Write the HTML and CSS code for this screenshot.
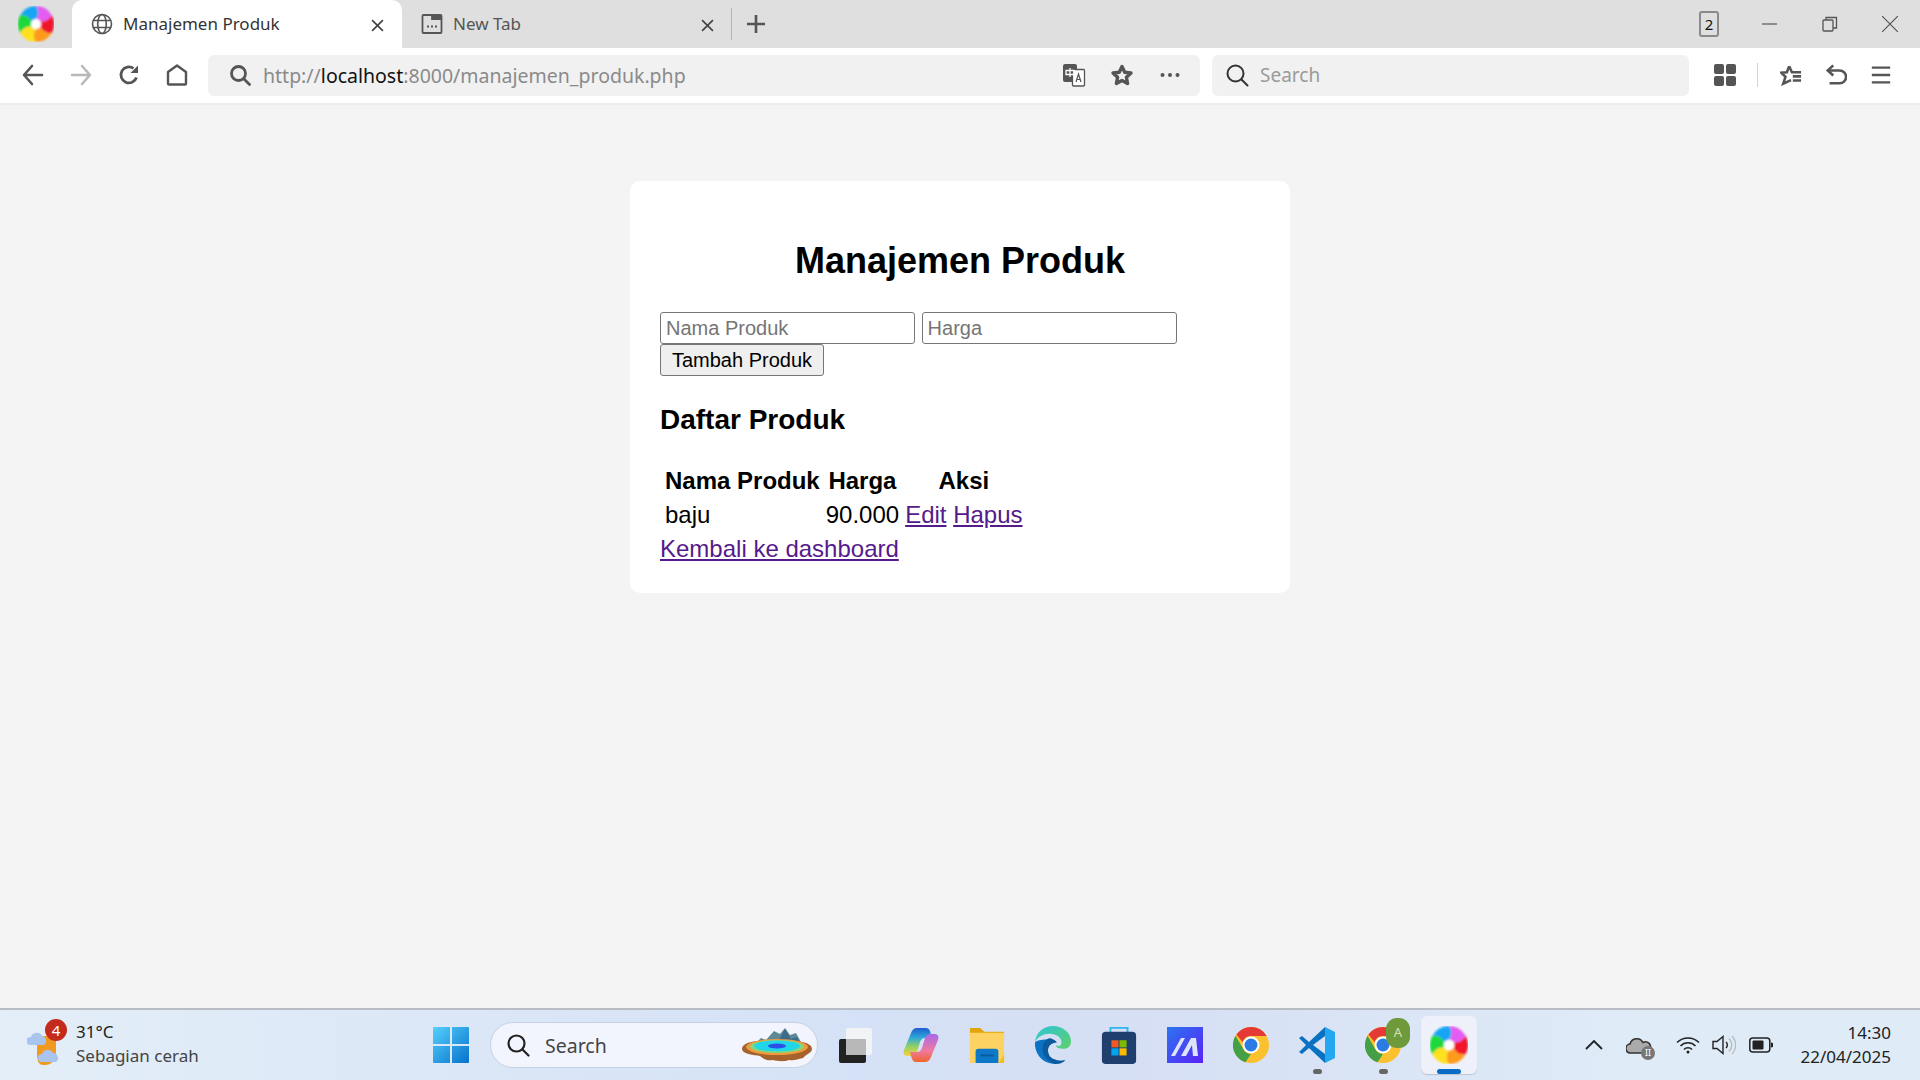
FILE: index.html
```html
<!DOCTYPE html>
<html lang="en">
<head>
    <meta charset="UTF-8">
    <meta name="viewport" content="width=device-width, initial-scale=1.0">
    <title>Manajemen Produk</title>
    <link rel="stylesheet" href="styles.css">
</head>
<body>
    <div class="tabstrip">
        <div class="app-logo">
            <svg class="swirl" viewBox="-18 -18 36 36">
                <defs>
                    <filter id="soft" x="-20%" y="-20%" width="140%" height="140%"><feGaussianBlur stdDeviation="0.9"/></filter>
                    <path id="petal" d="M0 -18A18 18 0 0 1 15.600 -9C13.600 -4.400 9.300 -1.900 4.330 -2.500L0 -5C3 -9 3 -14 0 -18z"/>
                </defs>
                <g filter="url(#soft)" id="swirlshape">
                    <use href="#petal" fill="#e45cf2"/>
                    <use href="#petal" fill="#f0182c" transform="rotate(60)"/>
                    <use href="#petal" fill="#ff9a1a" transform="rotate(120)"/>
                    <use href="#petal" fill="#ffe01a" transform="rotate(180)"/>
                    <use href="#petal" fill="#1cd83a" transform="rotate(240)"/>
                    <use href="#petal" fill="#18a4f5" transform="rotate(300)"/>
                    <circle r="5" fill="#fff"/>
                </g>
            </svg>
        </div>
        <div class="tab tab-active">
            <svg class="tab-icon" viewBox="0 0 22 22" fill="none" stroke="#555" stroke-width="1.6"><circle cx="11" cy="11" r="9.5"/><ellipse cx="11" cy="11" rx="4.3" ry="9.5"/><path d="M2 7.5h18M2 14.5h18"/></svg>
            <span class="tab-title">Manajemen Produk</span>
            <svg class="tab-close" viewBox="0 0 12 12" stroke="#444" stroke-width="1.5"><path d="M1 1l10 10M11 1L1 11"/></svg>
        </div>
        <div class="tab">
            <svg class="tab-icon" viewBox="0 0 22 22" fill="none" stroke="#555" stroke-width="1.8"><rect x="1.5" y="2" width="19" height="18" rx="1"/><path d="M11 3h9v3h-9z" fill="#555"/><path d="M6 13.5h2M10 13.5h2M14 13.5h2" stroke-width="2"/></svg>
            <span class="tab-title muted">New Tab</span>
            <svg class="tab-close" viewBox="0 0 12 12" stroke="#444" stroke-width="1.5"><path d="M1 1l10 10M11 1L1 11"/></svg>
        </div>
        <div class="tab-sep"></div>
        <svg class="new-tab" viewBox="0 0 20 20" stroke="#555" stroke-width="2.6"><path d="M10 1v18M1 10h18"/></svg>
        <div class="win-controls">
            <div class="tab-count">2</div>
            <svg class="win-btn" viewBox="0 0 16 16" stroke="#555" stroke-width="1.2"><path d="M0 8h15"/></svg>
            <svg class="win-btn" viewBox="0 0 16 16" fill="none" stroke="#555" stroke-width="1.3"><rect x="1" y="4" width="10" height="11" rx="1"/><path d="M4 4V1.5h10.5V12H11"/></svg>
            <svg class="win-btn" viewBox="0 0 16 16" stroke="#555" stroke-width="1.2"><path d="M0 0l16 16M16 0L0 16"/></svg>
        </div>
    </div>

    <div class="toolbar">
        <svg class="nav-icon" viewBox="0 0 22 22" fill="none" stroke="#555" stroke-width="2.6" stroke-linecap="round" stroke-linejoin="round"><path d="M10 2l-8 9 8 9M2.500 11H20"/></svg>
        <svg class="nav-icon" viewBox="0 0 22 22" fill="none" stroke="#b9b9b9" stroke-width="2.6" stroke-linecap="round" stroke-linejoin="round"><path d="M12 2l8 9-8 9M19.500 11H2"/></svg>
        <svg class="nav-icon" viewBox="0 0 22 22" fill="none" stroke="#555" stroke-width="2.8"><path d="M18.500 13.500A8 8 0 1 1 15.500 4.300"/><path d="M20 1.500v7.500h-7.500z" fill="#555" stroke="none"/></svg>
        <svg class="nav-icon" viewBox="0 0 22 22" fill="none" stroke="#555" stroke-width="2.4" stroke-linejoin="round"><path d="M11 1.500l9 6.500v11.500a1 1 0 0 1-1 1H3a1 1 0 0 1-1-1V8z"/></svg>
        <div class="addressbar">
            <svg class="search-icon" viewBox="0 0 22 22" fill="none" stroke="#555" stroke-width="2.8" stroke-linecap="round"><circle cx="9.500" cy="9.500" r="7"/><path d="M15 15l5.500 5.500"/></svg>
            <div class="url"><span class="url-dim">http://</span>localhost<span class="url-dim">:8000/manajemen_produk.php</span></div>
            <svg class="addr-icon" viewBox="0 0 24 24"><rect x="1" y="1" width="14" height="18" rx="2" fill="#555"/><rect x="10.500" y="6.500" width="12" height="16.500" rx="1" fill="#fff" stroke="#555" stroke-width="1.300"/><path d="M4 7.500h8v4H4zM8 5v9" fill="none" stroke="#fff" stroke-width="1.300"/><path d="M14 19l2.500-8 2.500 8M15 16.500h3" fill="none" stroke="#555" stroke-width="1.200"/></svg>
            <svg class="addr-icon" viewBox="0 0 24 24" fill="none" stroke="#555" stroke-width="3.400" stroke-linejoin="round"><path d="M12 3.500l2.700 5.700 6.300.8-4.600 4.300 1.200 6.200-5.600-3.100-5.600 3.100 1.200-6.200L3 10l6.300-.8z"/></svg>
            <svg class="addr-icon" viewBox="0 0 24 24" fill="#555"><circle cx="4.500" cy="12" r="2"/><circle cx="12" cy="12" r="2"/><circle cx="19.500" cy="12" r="2"/></svg>
        </div>
        <div class="searchbar">
            <svg class="search-icon thin" viewBox="0 0 24 24" fill="none" stroke="#333" stroke-width="2" stroke-linecap="round"><circle cx="10.500" cy="10.500" r="8"/><path d="M16.500 16.500l6 6"/></svg>
            <span class="search-text">Search</span>
        </div>
        <div class="tools">
            <svg class="tool-icon" viewBox="0 0 22 22" fill="#555"><rect x="0" y="0" width="10" height="10" rx="2"/><rect x="12" y="0" width="10" height="10" rx="2"/><rect x="0" y="12" width="10" height="10" rx="2"/><rect x="12" y="12" width="10" height="10" rx="2"/></svg>
            <div class="tool-sep"></div>
            <svg class="tool-icon" viewBox="0 0 24 24" fill="none" stroke="#555" stroke-width="2.800"><path d="M10 2.500L7.500 9 1.500 9.500 6 14 3.500 21.500 12 17.500"/><path d="M10 2.500L13 9h10M14 13.500h9M14 18h9"/></svg>
            <svg class="tool-icon" viewBox="0 0 24 24" fill="none" stroke="#555" stroke-width="2.800"><path d="M9 1.500L3 7l6 5.500"/><path d="M3 7h13a6.500 6.500 0 0 1 0 14H5"/></svg>
            <svg class="tool-icon" viewBox="0 0 24 24" stroke="#555" stroke-width="2.600"><path d="M2 4h20M2 12h20M2 20h20"/></svg>
        </div>
    </div>

    <main class="page">
        <div class="container">
            <h2>Manajemen Produk</h2>
            <form class="product-form">
                <input type="text" placeholder="Nama Produk">
                <input type="text" placeholder="Harga">
                <button type="button">Tambah Produk</button>
            </form>
            <h3>Daftar Produk</h3>
            <table>
                <tr>
                    <th>Nama Produk</th>
                    <th>Harga</th>
                    <th>Aksi</th>
                </tr>
                <tr>
                    <td>baju</td>
                    <td>90.000</td>
                    <td><a href="#">Edit</a> <a href="#">Hapus</a></td>
                </tr>
            </table>
            <a class="back-link" href="#">Kembali ke dashboard</a>
        </div>
    </main>

    <footer class="taskbar">
        <div class="weather">
            <div class="weather-icon">
                <svg viewBox="0 0 40 42" width="40" height="42"><path d="M10 12h19v18a11 11 0 0 1-11 11h-2C11 41 10 35 10 30z" fill="#f29a1f"/><path d="M3 21a4 4 0 0 1 1-8 6 6 0 0 1 11-1 5 5 0 0 1 2 9z" fill="#a9c4ee"/><path d="M15 38a4 4 0 0 1 0-8 6 6 0 0 1 11-1 5 5 0 0 1 3 9z" fill="#a9c4ee"/></svg>
                <span class="weather-badge">4</span>
            </div>
            <div class="weather-text">
                <div class="temp">31°C</div>
                <div class="cond">Sebagian cerah</div>
            </div>
        </div>
        <svg class="start" viewBox="0 0 36 36"><defs><linearGradient id="winblue" x1="0" y1="0" x2="1" y2="1"><stop offset="0" stop-color="#55d0fb"/><stop offset="1" stop-color="#0672cc"/></linearGradient></defs><path d="M1 0h16v17H0V1a1 1 0 0 1 1-1zM19 0h16a1 1 0 0 1 1 1v16H19zM0 19h17v17H1a1 1 0 0 1-1-1zM19 19h17v16a1 1 0 0 1-1 1H19z" fill="url(#winblue)"/></svg>
        <div class="task-search">
            <svg class="task-search-icon" viewBox="0 0 24 24" fill="none" stroke="#222" stroke-width="2.200" stroke-linecap="round"><circle cx="10.500" cy="10.500" r="8"/><path d="M16.500 16.500l6 6"/></svg>
            <span class="task-search-text">Search</span>
            <svg class="geyser" viewBox="0 0 72 38"><path d="M14 18l6-6 5 2 8-9 6 3 5-6 5 7 6-2 6 11z" fill="#5b8a96"/><path d="M36 18l8-15 6 10 6-2 4 8z" fill="#3d6b8a"/><path d="M1 23c0-7 15-9 35-9s35 2 35 9c0 4-6 5-9 9-6 1-8 3-14 2-5 2-12 1-16 0-5 1-10-1-13-4-6-1-18-2-18-7z" fill="#a5622b"/><ellipse cx="36" cy="21" rx="31" ry="8" fill="#ef9a3c"/><ellipse cx="36" cy="20.500" rx="27" ry="6.500" fill="#7fd880"/><ellipse cx="36" cy="20" rx="23" ry="5.500" fill="#22d6ea"/><ellipse cx="36" cy="20" rx="9" ry="2.500" fill="#2a50e8"/></svg>
        </div>
        <div class="apps">
            <div class="app"><svg class="app-icon" viewBox="0 0 36 36"><rect x="2" y="12" width="27" height="24" rx="2" fill="#222"/><rect x="9" y="1" width="26" height="27" rx="2" fill="#f4f4f4" opacity=".92"/><rect x="9" y="12" width="20" height="16" fill="#b8b8b8"/></svg></div>
            <div class="app"><svg class="app-icon" viewBox="0 0 36 36"><defs><linearGradient id="cop1" x1="0" y1="0" x2="0" y2="1"><stop offset="0" stop-color="#1d5fd0"/><stop offset=".35" stop-color="#2fa8d8"/><stop offset=".65" stop-color="#8fd068"/><stop offset="1" stop-color="#f5d23c"/></linearGradient><linearGradient id="cop2" x1="0" y1="0" x2="0" y2="1"><stop offset="0" stop-color="#f0652c"/><stop offset=".4" stop-color="#ee7aa0"/><stop offset="1" stop-color="#a868e8"/></linearGradient></defs><path d="M14 1h9c2 0 3 1 4 3l2 7h-7c-3 0-4 2-5 4l-3 10c-1 3-3 4-5 4H4c-3 0-4-3-3-6l7-17c1-3 3-5 6-5z" fill="url(#cop1)"/><path d="M14 1h9c2 0 3 1 4 3l2 7h-7c-3 0-4 2-5 4l-3 10c-1 3-3 4-5 4H4c-3 0-4-3-3-6l7-17c1-3 3-5 6-5z" fill="url(#cop2)" transform="rotate(180 18 18)"/></svg></div>
            <div class="app"><svg class="app-icon" viewBox="0 0 36 40"><path d="M0 3a1 1 0 0 1 1-1h10l4 4h20a1 1 0 0 1 1 1v4H0z" fill="#e2a50c"/><path d="M0 7h36v32H0z" fill="#fcd262"/><path d="M6 37V27a3 3 0 0 1 3-3h18a3 3 0 0 1 3 3v12H6z" fill="#0d78c8"/><path d="M11 31h14" stroke="#075a9e" stroke-width="2"/><path d="M30 39h6V30z" fill="#f5be1b"/></svg></div>
            <div class="app"><svg class="app-icon" viewBox="0 0 38 40"><defs><linearGradient id="edge1" x1="0" y1="0" x2="1" y2="1"><stop offset="0" stop-color="#2fc5d8"/><stop offset="1" stop-color="#5dd06a"/></linearGradient></defs><path d="M19 0C9 0 1 7 0 17c3-6 9-9 15-9 8 0 13 4 13 9 0 2-1 4-3 4s-3-1-3-1c0 3 4 4 8 4 5 0 8-3 8-8C38 7 29 0 19 0z" fill="url(#edge1)"/><path d="M0 17C-1 30 9 40 21 40c4 0 8-1 11-4-4 1-13 1-17-5-2-4-2-9 2-12 2-1 4-2 6-2-2-2-5-3-8-3C8 14 3 15 0 17z" fill="#0c72c4"/><path d="M15 13c-5 2-7 6-7 11 0 7 5 13 13 16 4 0 8-1 11-4-4 1-13 1-17-5-2-4-2-9 2-12 2-1 4-2 6-2-2-2-5-4-8-4z" fill="#0a5a9c"/></svg></div>
            <div class="app"><svg class="app-icon" viewBox="0 0 36 40"><path d="M9 9V2h18v7" fill="none" stroke="#2fb6ec" stroke-width="2"/><rect x="0" y="6" width="36" height="34" rx="4" fill="#1f3f6e"/><rect x="10" y="15" width="7.500" height="7.500" fill="#f05a22"/><rect x="18.500" y="15" width="7.500" height="7.500" fill="#7fba00"/><rect x="10" y="23.500" width="7.500" height="7.500" fill="#00a4ef"/><rect x="18.500" y="23.500" width="7.500" height="7.500" fill="#ffb900"/></svg></div>
            <div class="app"><svg class="app-icon" viewBox="0 0 36 36"><defs><linearGradient id="mblue" x1="0" y1="0" x2="1" y2="1"><stop offset="0" stop-color="#2b74f0"/><stop offset="1" stop-color="#5a22f5"/></linearGradient></defs><rect width="36" height="36" fill="url(#mblue)"/><path d="M4 29L14 11h4L8 29zM14 29l10-18h5l2 18h-5l-1-11-6 11z" fill="#dde3fb"/></svg></div>
            <div class="app"><svg class="app-icon" viewBox="0 0 36 36"><circle cx="18" cy="18" r="18" fill="#fbc02d"/><path d="M18 0a18 18 0 0 1 15.600 9H18a9 9 0 0 0-8.500 6L3.400 7.500A18 18 0 0 1 18 0z" fill="#e53935"/><path d="M2.500 8.800l8 13.700a9 9 0 0 0 7.500 4.500L12.500 35.300A18 18 0 0 1 2.500 8.800z" fill="#43a047"/><circle cx="18" cy="18" r="8.500" fill="#fff"/><circle cx="18" cy="18" r="6.500" fill="#2c7be5"/></svg></div>
            <div class="app">
                <svg class="app-icon" viewBox="0 0 36 36"><path d="M26 0l10 5v26l-10 5z" fill="#24a6f0"/><path d="M26 0L10 15 3 9l-3 2 7 7-7 7 3 2 7-6 16 15v-9L14 18 26 9z" fill="#0a72c2"/></svg>
                <span class="run-dot"></span>
            </div>
            <div class="app">
                <svg class="app-icon" viewBox="0 0 36 36"><circle cx="18" cy="18" r="18" fill="#fbc02d"/><path d="M18 0a18 18 0 0 1 15.600 9H18a9 9 0 0 0-8.500 6L3.400 7.500A18 18 0 0 1 18 0z" fill="#e53935"/><path d="M2.500 8.800l8 13.700a9 9 0 0 0 7.500 4.500L12.500 35.300A18 18 0 0 1 2.500 8.800z" fill="#43a047"/><circle cx="18" cy="18" r="8.500" fill="#fff"/><circle cx="18" cy="18" r="6.500" fill="#2c7be5"/></svg>
                <span class="profile-badge">A</span>
                <span class="run-dot"></span>
            </div>
            <div class="app app-active">
                <svg class="swirl big" viewBox="-18 -18 36 36"><use href="#swirlshape"/></svg>
                <span class="run-bar"></span>
            </div>
        </div>
        <div class="tray">
            <svg class="tray-chevron" viewBox="0 0 18 10" fill="none" stroke="#222" stroke-width="1.800"><path d="M1 9l8-8 8 8"/></svg>
            <div class="tray-cloud">
                <svg viewBox="0 0 26 20" width="26" height="20"><path d="M5 18a4.500 4.500 0 0 1-1-9 7 7 0 0 1 13-1.500A5 5 0 0 1 24 14v1c0 2-2 3-4 3z" fill="#aaa" stroke="#333" stroke-width="1.600"/></svg>
                <span class="cloud-pause">II</span>
            </div>
            <svg class="tray-wifi" viewBox="0 0 24 18" fill="none" stroke="#222" stroke-width="1.500"><path d="M1 6.500a15.500 15.500 0 0 1 22 0M4.500 10a10.500 10.500 0 0 1 15 0M8 13.500a5.500 5.500 0 0 1 8 0"/><circle cx="12" cy="16" r="1.500" fill="#222" stroke="none"/></svg>
            <svg class="tray-volume" viewBox="0 0 24 22" fill="none" stroke="#222" stroke-width="1.400"><path d="M1 7.500h4l6-5v17l-6-5H1z"/><path d="M14 8a4 4 0 0 1 0 6"/><path d="M17 4.500a9 9 0 0 1 0 13M20 2a13 13 0 0 1 0 18" stroke="#bbb"/></svg>
            <svg class="tray-battery" viewBox="0 0 24 16" fill="none"><rect x=".8" y="1" width="20" height="14" rx="3" stroke="#222" stroke-width="1.500"/><rect x="3.500" y="3.500" width="11" height="9" rx="1" fill="#222"/><path d="M22 5.500a2.500 2.500 0 0 1 0 5z" fill="#222"/></svg>
            <div class="clock">
                <div>14:30</div>
                <div>22/04/2025</div>
            </div>
        </div>
    </footer>
</body>
</html>
```

FILE: styles.css
```css
html, body {
    height: 100%;
}

body {
    margin: 0;
    display: flex;
    flex-direction: column;
    height: 100vh;
    overflow: hidden;
    font-family: 'Liberation Sans', Arial, sans-serif;
    font-size: 24px;
    background: #f4f4f4;
    color: #000;
}

svg {
    display: block;
    flex: none;
}

/* browser tabs */
.tabstrip {
    display: flex;
    align-items: center;
    height: 48px;
    flex: none;
    background: #dfdfdf;
    font-family: 'Noto Sans', sans-serif;
    font-size: 17px;
    color: #444;
}

.app-logo {
    width: 71px;
    margin-right: 1px;
    display: flex;
    justify-content: center;
}

.swirl {
    width: 36px;
    height: 36px;
}

.swirl.big {
    width: 38px;
    height: 38px;
}

.tab {
    display: flex;
    align-items: center;
    width: 330px;
    height: 48px;
    box-sizing: border-box;
    padding: 0 18px 0 19px;
}

.tab-active {
    background: #fff;
    border-radius: 10px 10px 0 0;
}

.tab-icon {
    width: 22px;
    height: 22px;
}

.tab-title {
    flex: 1;
    margin: -2px 0 0 10px;
    color: #333;
}

.tab-title.muted {
    color: #555;
}

.tab-close {
    width: 13px;
    height: 13px;
    margin-top: 3px;
}

.tab-sep {
    width: 1px;
    height: 32px;
    background: #b5b5b5;
    margin-left: -1px;
}

.new-tab {
    width: 20px;
    height: 20px;
    margin-left: 14px;
}

.win-controls {
    display: flex;
    align-items: center;
    margin-left: auto;
    padding-right: 22px;
}

.tab-count {
    width: 16px;
    height: 22px;
    border: 2px solid #8a8a8a;
    border-radius: 3px;
    font-size: 15px;
    line-height: 22px;
    text-align: center;
    color: #111;
    margin-right: 43px;
}

.win-btn {
    width: 16px;
    height: 16px;
    margin-left: 44px;
}

.win-btn:first-of-type {
    margin-left: 0;
}

/* address row */
.toolbar {
    display: flex;
    align-items: center;
    height: 57px;
    flex: none;
    box-sizing: border-box;
    padding: 0 0 1px 22px;
    background: #fff;
    border-bottom: 2px solid #ececec;
    font-family: 'Noto Sans', sans-serif;
}

.nav-icon {
    width: 22px;
    height: 22px;
    margin-right: 26px;
}

.addressbar, .searchbar {
    display: flex;
    align-items: center;
    height: 41px;
    background: #f1f1f1;
    border-radius: 6px;
}

.addressbar {
    width: 992px;
    margin-left: -6px;
    margin-right: 12px;
    padding-left: 21px;
    box-sizing: border-box;
}

.search-icon {
    width: 22px;
    height: 22px;
}

.url {
    flex: 1;
    margin-left: 12px;
    font-size: 19.5px;
    color: #111;
}

.url-dim {
    color: #8a8a8a;
}

.addr-icon {
    width: 24px;
    height: 24px;
    margin-right: 24px;
}

.addr-icon:last-child {
    margin-right: 18px;
}

.searchbar {
    width: 477px;
    padding-left: 13px;
    box-sizing: border-box;
}

.search-icon.thin {
    width: 24px;
    height: 24px;
}

.search-text {
    margin-left: 11px;
    font-size: 19px;
    color: #9a9a9a;
}

.tools {
    display: flex;
    align-items: center;
    margin-left: 25px;
}

.tool-icon {
    width: 22px;
    height: 22px;
    margin-right: 23px;
}

.tool-sep {
    width: 1px;
    height: 24px;
    background: #d5d5d5;
    margin: 0 22px 0 -2px;
}

/* the php page */
.page {
    flex: 1;
    min-height: 0;
}

.container {
    width: 600px;
    margin: 76px auto 0;
    padding: 30px;
    background: #fff;
    border-radius: 10px;
}

h2 {
    margin: 29px 0 30px;
    font-size: 36px;
    line-height: 42px;
    text-align: center;
}

.product-form {
    font-size: 20px;
    line-height: 0;
}

input {
    width: 255px;
    height: 32px;
    box-sizing: border-box;
    margin: 0 1px 0 0;
    padding: 1px 5px;
    border: 1px solid #767676;
    border-radius: 3px;
    font-family: inherit;
    font-size: 20px;
}

button {
    width: 164px;
    height: 32px;
    padding: 0;
    border: 1px solid #767676;
    border-radius: 3px;
    background: #efefef;
    font-family: inherit;
    font-size: 20px;
    color: #000;
}

h3 {
    margin: 28px 0 27px;
    font-size: 28px;
    line-height: 32px;
}

table {
    border-spacing: 2.5px;
    margin-bottom: 1px;
}

th, td {
    padding: 1px 1px 1px 3px;
    line-height: 30px;
}

td:nth-child(2) {
    text-align: right;
}

a {
    color: #551a8b;
}

.back-link {
    display: block;
    line-height: 29px;
}

/* taskbar */
.taskbar {
    display: flex;
    align-items: center;
    height: 72px;
    flex: none;
    box-sizing: border-box;
    border-top: 2px solid #b8bcc4;
    background: linear-gradient(to right, #e3eef8, #d5e1f6 45%, #d6dff4 60%, #dfebf7 85%);
    font-family: 'Noto Sans', sans-serif;
    color: #222;
}

.weather {
    display: flex;
    align-items: center;
    width: 433px;
    box-sizing: border-box;
    padding-left: 27px;
}

.weather-icon {
    position: relative;
    width: 40px;
    height: 42px;
}

.weather-badge {
    position: absolute;
    top: -5px;
    left: 18px;
    width: 22px;
    height: 22px;
    border-radius: 50%;
    background: #c42b1c;
    color: #fff;
    font-size: 15px;
    line-height: 22px;
    text-align: center;
}

.weather-text {
    margin: -2px 0 0 9px;
    font-size: 17px;
    line-height: 24px;
}

.cond {
    color: #444;
}

.start {
    width: 36px;
    height: 36px;
}

.task-search {
    display: flex;
    align-items: center;
    width: 328px;
    height: 46px;
    box-sizing: border-box;
    margin-left: 21px;
    padding: 0 4px 0 15px;
    background: #f2f5fd;
    border-radius: 23px;
    border: 1px solid #c6d0e4;
}

.task-search-icon {
    width: 24px;
    height: 24px;
}

.task-search-text {
    flex: 1;
    margin-left: 15px;
    font-size: 19.5px;
    color: #444;
}

.geyser {
    width: 72px;
    height: 38px;
}

.apps {
    display: flex;
    margin-left: 4px;
}

.app {
    position: relative;
    display: flex;
    align-items: center;
    justify-content: center;
    width: 66px;
    height: 58px;
}

.app-icon {
    width: 36px;
    height: 38px;
}

.app-active {
    width: 56px;
    margin-left: 5px;
    background: #eef1fa;
    border-radius: 6px;
    box-shadow: 0 1px 1px rgba(0, 0, 0, .15);
}

.run-dot {
    position: absolute;
    left: 29px;
    bottom: 0;
    width: 9px;
    height: 5px;
    border-radius: 3px;
    background: #666;
}

.run-bar {
    position: absolute;
    left: 16px;
    bottom: 0;
    width: 24px;
    height: 5px;
    border-radius: 3px;
    background: #0a6cc4;
}

.profile-badge {
    position: absolute;
    top: 2px;
    left: 36px;
    width: 24px;
    height: 30px;
    border-radius: 11px;
    background: #6f9a3c;
    color: #d5e2b5;
    font-size: 13px;
    line-height: 28px;
    text-align: center;
}

.tray {
    display: flex;
    align-items: center;
    margin-left: auto;
    padding-right: 29px;
}

.tray-chevron {
    width: 18px;
    height: 10px;
    margin-right: 23px;
}

.tray-cloud {
    position: relative;
    width: 26px;
    height: 20px;
    margin-right: 24px;
}

.cloud-pause {
    position: absolute;
    right: -3px;
    bottom: -5px;
    width: 14px;
    height: 14px;
    border-radius: 50%;
    background: #777;
    color: #fff;
    font-size: 9px;
    line-height: 14px;
    text-align: center;
}

.tray-wifi {
    width: 24px;
    height: 18px;
    margin-right: 12px;
}

.tray-volume {
    width: 24px;
    height: 22px;
    margin-right: 13px;
}

.tray-battery {
    width: 24px;
    height: 16px;
    margin-right: 10px;
}

.clock {
    width: 108px;
    text-align: right;
    font-size: 17px;
    line-height: 24px;
}
```
